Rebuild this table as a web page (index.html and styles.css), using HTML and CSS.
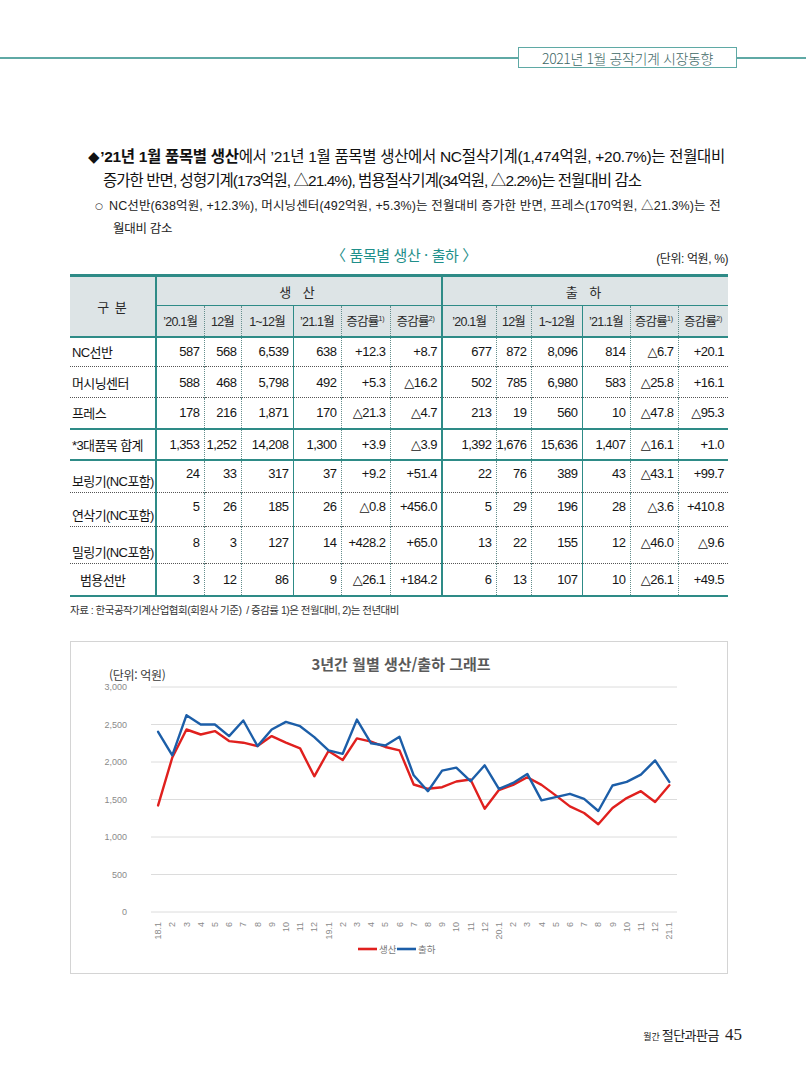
FILE: index.html
```html
<!DOCTYPE html>
<html lang="ko">
<head>
<meta charset="utf-8">
<title>2021년 1월 공작기계 시장동향</title>
<link rel="stylesheet" href="styles.css">
</head>
<body>
<div class="page">
  <header class="running-head">
    <span class="rule"></span>
    <span class="tag">2021년 1월 공작기계 시장동향</span>
    <span class="rule short"></span>
  </header>

  <section class="content">
    <p class="lead">
      <span class="line first"><span class="diamond">◆</span><b>’21년 1월 품목별 생산</b>에서 ’21년 1월 품목별 생산에서 NC절삭기계(1,474억원, +20.7%)는 전월대비</span>
      <span class="line indent">증가한 반면, 성형기계(173억원, △21.4%), 범용절삭기계(34억원, △2.2%)는 전월대비 감소</span>
    </p>
    <p class="sub">
      <span class="line first"><span class="circle">○</span>NC선반(638억원, +12.3%), 머시닝센터(492억원, +5.3%)는 전월대비 증가한 반면, 프레스(170억원, △21.3%)는 전</span>
      <span class="line indent">월대비 감소</span>
    </p>

    <div class="table-head">
      <span></span>
      <span class="table-title">〈 품목별 생산 · 출하 〉</span>
      <span class="unit">(단위: 억원, %)</span>
    </div>

    <table class="data">
      <colgroup>
        <col class="c-name">
        <col class="c48"><col class="c37"><col class="c52"><col class="c48"><col class="c49"><col class="c52">
        <col class="c54"><col class="c35"><col class="c51"><col class="c48"><col class="c48"><col class="c50">
      </colgroup>
      <thead>
        <tr class="h1">
          <th rowspan="2" class="name-h">구 분</th>
          <th colspan="6" class="grp">생 산</th>
          <th colspan="6" class="grp sl2">출 하</th>
        </tr>
        <tr class="h2">
          <th>’20.1월</th><th class="dl">12월</th><th class="dl">1~12월</th><th class="sl">’21.1월</th><th class="dl">증감률<sup>1)</sup></th><th class="dl">증감률<sup>2)</sup></th>
          <th class="sl2">’20.1월</th><th class="dl">12월</th><th class="dl">1~12월</th><th class="sl">’21.1월</th><th class="dl">증감률<sup>1)</sup></th><th class="dl">증감률<sup>2)</sup></th>
        </tr>
      </thead>
      <tbody>
        <tr class="r30">
          <td class="name">NC선반</td>
          <td>587</td><td class="dl">568</td><td class="dl">6,539</td><td class="sl">638</td><td class="dl">+12.3</td><td class="dl">+8.7</td>
          <td class="sl2">677</td><td class="dl">872</td><td class="dl">8,096</td><td class="sl">814</td><td class="dl">△6.7</td><td class="dl">+20.1</td>
        </tr>
        <tr class="r31">
          <td class="name">머시닝센터</td>
          <td>588</td><td class="dl">468</td><td class="dl">5,798</td><td class="sl">492</td><td class="dl">+5.3</td><td class="dl">△16.2</td>
          <td class="sl2">502</td><td class="dl">785</td><td class="dl">6,980</td><td class="sl">583</td><td class="dl">△25.8</td><td class="dl">+16.1</td>
        </tr>
        <tr class="r31 sep">
          <td class="name">프레스</td>
          <td>178</td><td class="dl">216</td><td class="dl">1,871</td><td class="sl">170</td><td class="dl">△21.3</td><td class="dl">△4.7</td>
          <td class="sl2">213</td><td class="dl">19</td><td class="dl">560</td><td class="sl">10</td><td class="dl">△47.8</td><td class="dl">△95.3</td>
        </tr>
        <tr class="r31 sep">
          <td class="name">*3대품목 합계</td>
          <td>1,353</td><td class="dl">1,252</td><td class="dl">14,208</td><td class="sl">1,300</td><td class="dl">+3.9</td><td class="dl">△3.9</td>
          <td class="sl2">1,392</td><td class="dl">1,676</td><td class="dl">15,636</td><td class="sl">1,407</td><td class="dl">△16.1</td><td class="dl">+1.0</td>
        </tr>
        <tr class="r33 low">
          <td class="name">보링기(NC포함)</td>
          <td>24</td><td class="dl">33</td><td class="dl">317</td><td class="sl">37</td><td class="dl">+9.2</td><td class="dl">+51.4</td>
          <td class="sl2">22</td><td class="dl">76</td><td class="dl">389</td><td class="sl">43</td><td class="dl">△43.1</td><td class="dl">+99.7</td>
        </tr>
        <tr class="r34 low">
          <td class="name">연삭기(NC포함)</td>
          <td>5</td><td class="dl">26</td><td class="dl">185</td><td class="sl">26</td><td class="dl">△0.8</td><td class="dl">+456.0</td>
          <td class="sl2">5</td><td class="dl">29</td><td class="dl">196</td><td class="sl">28</td><td class="dl">△3.6</td><td class="dl">+410.8</td>
        </tr>
        <tr class="r37 low">
          <td class="name">밀링기(NC포함)</td>
          <td>8</td><td class="dl">3</td><td class="dl">127</td><td class="sl">14</td><td class="dl">+428.2</td><td class="dl">+65.0</td>
          <td class="sl2">13</td><td class="dl">22</td><td class="dl">155</td><td class="sl">12</td><td class="dl">△46.0</td><td class="dl">△9.6</td>
        </tr>
        <tr class="r32 last">
          <td class="name in">범용선반</td>
          <td>3</td><td class="dl">12</td><td class="dl">86</td><td class="sl">9</td><td class="dl">△26.1</td><td class="dl">+184.2</td>
          <td class="sl2">6</td><td class="dl">13</td><td class="dl">107</td><td class="sl">10</td><td class="dl">△26.1</td><td class="dl">+49.5</td>
        </tr>
      </tbody>
    </table>

    <p class="source">자료 : 한국공작기계산업협회(회원사 기준) &nbsp;/ 증감률 1)은 전월대비, 2)는 전년대비</p>

    <div class="chart">
      <svg class="chart-svg" width="656" height="331" viewBox="0 0 656 331" xmlns="http://www.w3.org/2000/svg">
        <text class="c-title" x="330" y="28" text-anchor="middle">3년간 월별 생산/출하 그래프</text>
        <text class="c-unit" x="38" y="38">(단위: 억원)</text>
        <g class="grid">
          <line x1="80" y1="45" x2="606" y2="45"/>
          <line x1="80" y1="82.5" x2="606" y2="82.5"/>
          <line x1="80" y1="120" x2="606" y2="120"/>
          <line x1="80" y1="157.5" x2="606" y2="157.5"/>
          <line x1="80" y1="195" x2="606" y2="195"/>
          <line x1="80" y1="232.5" x2="606" y2="232.5"/>
          <line x1="80" y1="270" x2="606" y2="270"/>
        </g>
        <g class="ylab">
          <text x="56" y="48">3,000</text>
          <text x="56" y="85.5">2,500</text>
          <text x="56" y="123">2,000</text>
          <text x="56" y="160.5">1,500</text>
          <text x="56" y="198">1,000</text>
          <text x="56" y="235.5">500</text>
          <text x="56" y="273">0</text>
        </g>
        <g class="xlab">
          <text transform="translate(90.1 280) rotate(-90)">18.1</text>
          <text transform="translate(104.3 280) rotate(-90)">2</text>
          <text transform="translate(118.5 280) rotate(-90)">3</text>
          <text transform="translate(132.7 280) rotate(-90)">4</text>
          <text transform="translate(146.9 280) rotate(-90)">5</text>
          <text transform="translate(161.1 280) rotate(-90)">6</text>
          <text transform="translate(175.3 280) rotate(-90)">7</text>
          <text transform="translate(189.5 280) rotate(-90)">8</text>
          <text transform="translate(203.7 280) rotate(-90)">9</text>
          <text transform="translate(217.9 280) rotate(-90)">10</text>
          <text transform="translate(232.1 280) rotate(-90)">11</text>
          <text transform="translate(246.3 280) rotate(-90)">12</text>
          <text transform="translate(260.5 280) rotate(-90)">19.1</text>
          <text transform="translate(274.7 280) rotate(-90)">2</text>
          <text transform="translate(288.9 280) rotate(-90)">3</text>
          <text transform="translate(303.1 280) rotate(-90)">4</text>
          <text transform="translate(317.3 280) rotate(-90)">5</text>
          <text transform="translate(331.5 280) rotate(-90)">6</text>
          <text transform="translate(345.7 280) rotate(-90)">7</text>
          <text transform="translate(359.9 280) rotate(-90)">8</text>
          <text transform="translate(374.1 280) rotate(-90)">9</text>
          <text transform="translate(388.3 280) rotate(-90)">10</text>
          <text transform="translate(402.5 280) rotate(-90)">11</text>
          <text transform="translate(416.7 280) rotate(-90)">12</text>
          <text transform="translate(430.9 280) rotate(-90)">20.1</text>
          <text transform="translate(445.1 280) rotate(-90)">2</text>
          <text transform="translate(459.3 280) rotate(-90)">3</text>
          <text transform="translate(473.5 280) rotate(-90)">4</text>
          <text transform="translate(487.7 280) rotate(-90)">5</text>
          <text transform="translate(501.9 280) rotate(-90)">6</text>
          <text transform="translate(516.1 280) rotate(-90)">7</text>
          <text transform="translate(530.3 280) rotate(-90)">8</text>
          <text transform="translate(544.5 280) rotate(-90)">9</text>
          <text transform="translate(558.7 280) rotate(-90)">10</text>
          <text transform="translate(572.9 280) rotate(-90)">11</text>
          <text transform="translate(587.1 280) rotate(-90)">12</text>
          <text transform="translate(601.3 280) rotate(-90)">21.1</text>
        </g>
        <polyline class="s-prod" points="87.1,163.4 101.3,115.5 115.5,87.5 129.7,92.5 143.9,89.1 158.1,99.1 172.3,100.7 186.5,104.1 200.7,94.1 214.9,100.7 229.1,106.4 243.3,134.3 257.5,109 271.7,118 285.9,96.4 300.1,99.7 314.3,105 328.5,108.4 342.7,142.5 356.9,146.8 371.1,145.2 385.3,139.5 399.5,137.5 413.7,166.7 427.9,148.1 442.1,142.9 456.3,135.2 470.5,142.9 484.7,153.4 498.9,164.4 513.1,171 527.3,182.3 541.5,166 555.7,156.1 569.9,149.2 584.1,160 598.3,143.2"/>
        <polyline class="s-ship" points="87.1,89.8 101.3,113.3 115.5,73.2 129.7,82.5 143.9,82.5 158.1,94.1 172.3,78.5 186.5,104.1 200.7,87.5 214.9,79.9 229.1,84.2 243.3,95.1 257.5,108.4 271.7,111.8 285.9,77.6 300.1,101.3 314.3,103.5 328.5,94.8 342.7,133.3 356.9,149.2 371.1,128.6 385.3,125.6 399.5,139.2 413.7,123.3 427.9,146.8 442.1,140.9 456.3,131.9 470.5,158.4 484.7,155.1 498.9,151.8 513.1,156.8 527.3,169 541.5,143.5 555.7,139.9 569.9,132.6 584.1,118.4 598.3,139.9"/>
        <g class="legend">
          <line class="lg-prod" x1="287" y1="307" x2="306" y2="307"/>
          <text x="308" y="310.5">생산</text>
          <line class="lg-ship" x1="326" y1="307" x2="345" y2="307"/>
          <text x="347" y="310.5">출하</text>
        </g>
      </svg>
    </div>
  </section>

  <footer class="folio">
    <span class="mag-small">월간</span>
    <span class="mag">절단과판금</span>
    <span class="pno">45</span>
  </footer>
</div>
</body>
</html>
```

FILE: styles.css
```css
* { box-sizing: border-box; }

body {
  margin: 0;
  background: #ffffff;
  font-family: "Liberation Sans", "Noto Sans CJK KR", sans-serif;
  color: #1b1b1b;
}

.page {
  width: 806px;
  height: 1082px;
  overflow: hidden;
}

/* running head */
.running-head {
  display: flex;
  align-items: center;
  margin-top: 47px;
  height: 21px;
}
.running-head .rule {
  flex: 1;
  height: 2px;
  background: #5fa9a5;
}
.running-head .rule.short { flex: 0 0 69px; }
.tag {
  flex: 0 0 219px;
  height: 21px;
  border: 1px solid #5fa9a5;
  display: flex;
  align-items: center;
  justify-content: center;
  font-family: "Noto Sans CJK KR", sans-serif;
  font-size: 14px;
  font-weight: 300;
  color: #3d6765;
  letter-spacing: -0.4px;
}

/* content column */
.content {
  padding: 0 78px 0 70px;
}

.lead {
  margin: 77px 0 0 18px;
  font-family: "Liberation Sans", "Noto Sans CJK KR", sans-serif;
  font-size: 15.5px;
  line-height: 24px;
  letter-spacing: -0.95px;
  color: #111;
}
.lead .line, .sub .line {
  display: block;
  white-space: nowrap;
}
.lead .line.first { letter-spacing: -0.32px; }
.lead .indent { padding-left: 15px; }
.lead b { font-weight: 700; }
.diamond {
  font-family: "DejaVu Sans", sans-serif;
  font-size: 15px;
  margin-right: 1px;
}

.sub {
  margin: 2px 0 0 25px;
  font-size: 12.5px;
  line-height: 22px;
  letter-spacing: -0.3px;
  color: #222;
}
.sub .line.first { letter-spacing: 0.12px; }
.sub .indent { padding-left: 18px; }
.circle {
  font-family: "DejaVu Sans", sans-serif;
  font-size: 9px;
  margin-right: 6px;
  position: relative;
  top: -1px;
}

/* table heading */
.table-head {
  display: grid;
  grid-template-columns: 1fr auto 1fr;
  align-items: end;
  height: 24px;
  margin-top: 2px;
}
.table-title {
  font-family: "Noto Sans CJK KR", sans-serif;
  font-size: 15px;
  color: #1f8f8a;
  letter-spacing: -0.4px;
  line-height: 22px;
  padding-left: 10px;
}
.unit {
  justify-self: end;
  font-size: 12px;
  letter-spacing: -0.4px;
  line-height: 18px;
  margin-bottom: -2px;
}

/* data table */
.data {
  margin-top: 8px;
  width: 658px;
  border-collapse: collapse;
  table-layout: fixed;
  font-family: "Liberation Sans", "DejaVu Sans", "Noto Sans CJK KR", sans-serif;
  font-size: 13px;
  letter-spacing: -0.5px;
  color: #151515;
}
.c-name { width: 86px; }
.c48 { width: 48px; }
.c37 { width: 37px; }
.c52 { width: 52px; }
.c49 { width: 49px; }
.c54 { width: 54px; }
.c35 { width: 35px; }
.c51 { width: 51px; }
.c50 { width: 50px; }

.data thead th {
  background: #dde4e6;
  font-weight: 400;
  font-size: 13px;
  color: #2a2a2a;
  padding: 0;
  white-space: nowrap;
}
.data thead tr.h1 th {
  border-top: 3px solid #2e8b87;
  height: 30px;
}
.data thead tr.h2 th {
  height: 31px;
  border-bottom: 2px solid #2e8b87;
  border-top: 1.5px solid #2e8b87;
  font-size: 12.5px;
  letter-spacing: -0.8px;
}
.data th.name-h {
  border-right: 2px solid #2e8b87;
  border-bottom: 2px solid #2e8b87;
  letter-spacing: 1px;
}
.data th.grp { letter-spacing: 4px; }
.data sup {
  font-size: 7px;
  vertical-align: 5px;
  line-height: 0;
  letter-spacing: 0;
}

.data td {
  padding: 0 4px 0 0;
  text-align: right;
  white-space: nowrap;
  vertical-align: middle;
}
.data td.name {
  text-align: left;
  padding: 0 0 0 2px;
  border-right: 2px solid #2e8b87;
  letter-spacing: -0.6px;
}
.data td.name.in { padding-left: 10px; }

.data .dl { border-left: 1px dotted #648e8c; }
.data .sl { border-left: 1.5px solid #2e8b87; }
.data .sl2 { border-left: 2px solid #2e8b87; }

.data tbody tr { border-bottom: 1px dotted #555; }
.data tbody tr.sep { border-bottom: 2px solid #2e8b87; }
.data tbody tr.last { border-bottom: 2px solid #2e8b87; }

.r30 td { height: 30px; }
.r31 td { height: 31px; }
.r32 td { height: 32px; }
.r33 td { height: 33px; }
.r34 td { height: 34px; }
.r37 td { height: 37px; }

.data tr.low td { padding-bottom: 6px; }
.data tr.low td.name {
  vertical-align: bottom;
  padding-bottom: 2px;
}

.source {
  margin: 5px 0 0 0;
  font-size: 10.5px;
  letter-spacing: -0.5px;
  color: #333;
  line-height: 16px;
}

/* chart */
.chart {
  margin-top: 23px;
  width: 658px;
  height: 333px;
  border: 1px solid #d4d4d4;
}
.chart-svg { display: block; }
.c-title {
  font-family: "Noto Sans CJK KR", sans-serif;
  font-size: 15px;
  font-weight: 700;
  fill: #5a5a5a;
}
.c-unit {
  font-family: "Noto Sans CJK KR", sans-serif;
  font-size: 12px;
  fill: #3a3a3a;
  letter-spacing: -0.3px;
}
.grid line {
  stroke: #dcdcdc;
  stroke-width: 1;
}
.ylab text {
  font-family: "Liberation Sans", sans-serif;
  font-size: 9px;
  fill: #8a8a8a;
  text-anchor: end;
}
.xlab text {
  font-family: "Liberation Sans", sans-serif;
  font-size: 9px;
  fill: #8a8a8a;
  text-anchor: end;
}
.s-prod, .s-ship {
  fill: none;
  stroke-width: 2.4;
  stroke-linejoin: round;
  stroke-linecap: round;
}
.s-prod { stroke: #e0201e; }
.s-ship { stroke: #1c5ea8; }
.legend line { stroke-width: 2.6; }
.lg-prod { stroke: #e0201e; }
.lg-ship { stroke: #1c5ea8; }
.legend text {
  font-family: "Noto Sans CJK KR", sans-serif;
  font-size: 9.5px;
  fill: #7a7a7a;
}

/* folio */
.folio {
  display: flex;
  justify-content: flex-end;
  align-items: baseline;
  margin-top: 51px;
  padding-right: 64px;
  color: #222;
}
.mag-small {
  font-family: "Noto Sans CJK KR", sans-serif;
  font-size: 9px;
  margin-right: 2px;
}
.mag {
  font-family: "Noto Sans CJK KR", sans-serif;
  font-size: 13px;
  letter-spacing: -0.5px;
  margin-right: 6px;
}
.pno {
  font-family: "Liberation Serif", serif;
  font-size: 17px;
}
```
